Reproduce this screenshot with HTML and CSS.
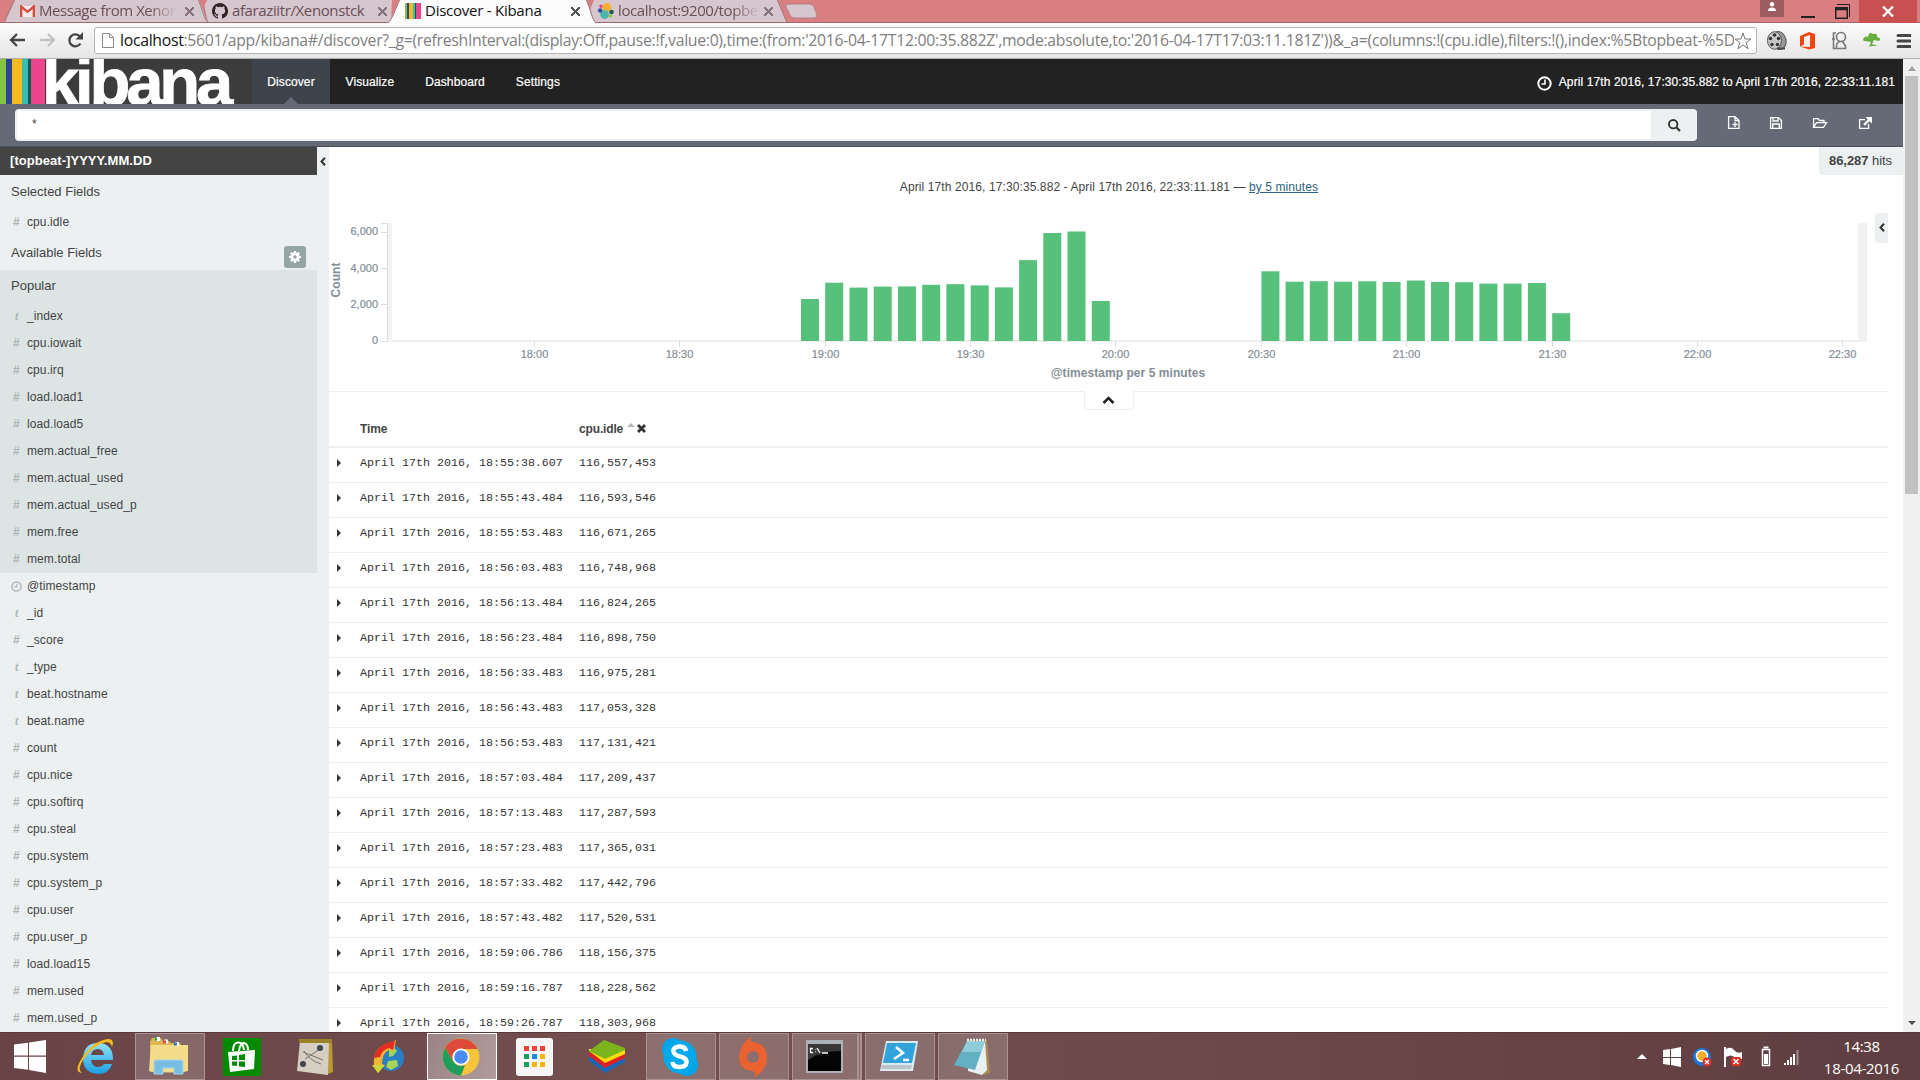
FILE: index.html
```html
<!DOCTYPE html>
<html lang="en">
<head>
<meta charset="utf-8">
<title>Discover - Kibana</title>
<link rel="stylesheet" href="styles.css">
</head>
<body>
<div class="screen">
<header class="tabstrip">
  <svg class="tabshapes" width="1920" height="23" viewBox="0 0 1920 23">
    <path d="M4 23L15 -1H200L208 23Z" fill="#d6c6ce" stroke="#a3787f"/>
    <path d="M208 23L203 -1H392L391 23Z" fill="#d6c6ce"/>
    <path d="M198 -1C203 10 204 20 208 22" fill="none" stroke="#a3787f"/>
    <path d="M199 0H207L203 9Z" fill="#d97f82"/>
    <path d="M393 0H401L397 9Z" fill="#d97f82"/>
    <path d="M594 23L587 -1H777L787 23Z" fill="#d6c6ce" stroke="#a3787f"/>
    <path d="M585 0H594L590 10Z" fill="#d97f82"/>
    <path d="M0 22.5H390M594 22.5H1920" stroke="#a3686d"/>
    <path d="M388 23C392 20 395 10 400 -1H586C591 10 592 20 596 23Z" fill="#fbfbfb"/>
    <path d="M388 23C392 20 395 10 400 -1M586 -1C591 10 592 20 596 23" fill="none" stroke="#a3787f"/>
    <path d="M788 4H810Q813 4 814 7L817 15Q817 18 814 18H794Q791 18 790 15L786 7Q785 4 788 4Z" fill="#d6c6ce" stroke="#b58087"/>
  </svg>
  <div class="tab tab-mail">
    <svg width="15" height="12" viewBox="0 0 15 12"><path d="M1 1H14V12H1Z" fill="#f3e9e9"/><path d="M1.2 12V1.5L7.5 6.8L13.8 1.5V12" fill="none" stroke="#d54b3d" stroke-width="2.3"/></svg>
    <span class="tabtext faded">Message from Xenor</span><i class="x"></i>
  </div>
  <div class="tab tab-git">
    <svg width="16" height="16" viewBox="0 0 16 16"><path fill="#33242a" d="M8 0C3.58 0 0 3.58 0 8c0 3.54 2.29 6.53 5.47 7.59.4.07.55-.17.55-.38v-1.49c-2.01.37-2.53-.49-2.69-.94-.09-.23-.48-.94-.82-1.13-.28-.15-.68-.52-.01-.53.63-.01 1.08.58 1.23.82.72 1.21 1.87.87 2.33.66.07-.52.28-.87.51-1.07-1.78-.2-3.64-.89-3.64-3.95 0-.87.31-1.59.82-2.15-.08-.2-.36-1.02.08-2.12 0 0 .67-.21 2.2.82a7.6 7.6 0 0 1 4 0c1.53-1.04 2.2-.82 2.2-.82.44 1.1.16 1.92.08 2.12.51.56.82 1.27.82 2.15 0 3.07-1.87 3.75-3.65 3.95.29.25.54.73.54 1.48v2.2c0 .21.15.46.55.38A8 8 0 0 0 8 0Z"/></svg>
    <span class="tabtext">afaraziitr/Xenonstck</span><i class="x"></i>
  </div>
  <div class="tab tab-active">
    <i class="kfav"></i>
    <span class="tabtext">Discover - Kibana</span><i class="x"></i>
  </div>
  <div class="tab tab-es">
    <svg width="16" height="16" viewBox="0 0 16 16"><circle cx="9" cy="4.5" r="4.4" fill="#f4b02a"/><circle cx="6.6" cy="11.5" r="4.4" fill="#4ab5a9"/><circle cx="3" cy="3.3" r="1.7" fill="#e8478b"/><circle cx="2.2" cy="7.5" r="2.2" fill="#2f4f9a"/><circle cx="13.5" cy="9" r="2.3" fill="#24584f"/><circle cx="12.3" cy="13" r="1.8" fill="#93c83e"/></svg>
    <span class="tabtext faded">localhost:9200/topbe</span><i class="x"></i>
  </div>
  <div class="wincontrols">
    <span class="profile"><svg width="10" height="9" viewBox="0 0 10 9"><circle cx="5" cy="2.2" r="2.2" fill="#fff"/><path d="M1 9Q1 5.4 5 5.4T9 9Z" fill="#fff"/></svg></span>
    <span class="minimize"></span>
    <svg class="restore" width="15" height="16" viewBox="0 0 15 16"><path d="M2 .5H14.5V13M0 4.5H12" fill="none" stroke="#222"/><path d="M.75 3.75H12.25V14.25H.75Z" fill="none" stroke="#222" stroke-width="1.5"/><path d="M0 5H13" stroke="#222" stroke-width="2.5"/></svg>
    <span class="close"><svg width="12" height="11" viewBox="0 0 12 11"><path d="M1 .5L11 10.5M11 .5L1 10.5" stroke="#fff" stroke-width="2.3"/></svg></span>
  </div>
</header>
<nav class="toolbar">
  <svg class="navicons" width="76" height="16" viewBox="0 0 76 16"><g fill="none" stroke="#464646" stroke-width="2.3"><path d="M16 8H2M8 2L2 8L8 14"/><path d="M31 8H45M39 2L45 8L39 14" stroke="#c2c2c2"/><path d="M71.5 11.5A6 6 0 1 1 71 4.4"/></g><path d="M74 0V7.5H66.5Z" fill="#464646"/></svg>
  <div class="urlbar">
    <svg width="12" height="15" viewBox="0 0 12 15"><path d="M.5.5H7.5L11.5 4.5V14.5H.5ZM7.5.5V4.5H11.5" fill="#fff" stroke="#8c8c8c"/></svg>
    <span class="url"><b>localhost</b>:5601/app/kibana#/discover?_g=(refreshInterval:(display:Off,pause:!f,value:0),time:(from:'2016-04-17T12:00:35.882Z',mode:absolute,to:'2016-04-17T17:03:11.181Z'))&amp;_a=(columns:!(cpu.idle),filters:!(),index:%5Btopbeat-%5DYYYY</span>
    <svg width="18" height="18" viewBox="0 0 18 18"><path d="M9 1L11 7H17L12.2 10.7L14 16.7L9 13L4 16.7L5.8 10.7L1 7H7Z" fill="#fff" stroke="#777"/></svg>
  </div>
  <svg class="ext" width="145" height="20" viewBox="0 0 145 20">
    <ellipse cx="13" cy="9.5" rx="7" ry="9" fill="#999" stroke="#555" transform="rotate(-14 13 9.5)"/><ellipse cx="8.500" cy="9.500" rx="7" ry="8.800" fill="#c5c5c5" stroke="#555"/><g fill="#333"><circle cx="8.500" cy="4" r="1.800"/><circle cx="4.500" cy="7.500" r="1.700"/><circle cx="12.500" cy="7.500" r="1.700"/><circle cx="6" cy="13.500" r="1.700"/><circle cx="11.500" cy="13.500" r="1.700"/></g><path d="M11 17.500H19" stroke="#444" stroke-width="2"/>
    <path d="M34 5L43 1L49 3V17L43 18.500L34 15.500L44 16V4L38 6V13.500L34 15.500Z" fill="#f0450f"/>
    <g fill="none" stroke="#777" stroke-width="1.600"><circle cx="75" cy="6" r="4.500"/><path d="M70 2H67.500V17.500H79.500V15L76.500 10.500M70.500 17Q70 11 74 10.500M66 8H69"/></g>
    <path d="M97 9Q98 4 102 6Q103 0 107 3Q112 2 111 6Q116 7 113 10L108 9L106 13L112 15L106 15L103 16L105 11L98 10Z" fill="#67b040"/>
    <path d="M132 4.500H144M132 10H144M132 15.500H144" stroke="#454545" stroke-width="3" stroke-linecap="round"/>
  </svg>
</nav>
<div class="page">
<div class="app">
  <div class="knav">
    <div class="logo"><i></i><span>kibana</span></div>
    <a class="active">Discover</a><a>Visualize</a><a>Dashboard</a><a>Settings</a>
    <div class="timepicker">
      <svg width="15" height="15" viewBox="0 0 15 15"><circle cx="7.500" cy="7.500" r="6.200" fill="none" stroke="#fff" stroke-width="2"/><path d="M8 3.500V8H4.500" fill="none" stroke="#fff" stroke-width="1.600"/></svg>
      <span>April 17th 2016, 17:30:35.882 to April 17th 2016, 22:33:11.181</span>
    </div>
  </div>
  <div class="searchrow">
    <div class="query"><span>*</span><button><svg width="13" height="13" viewBox="0 0 13 13"><circle cx="5.200" cy="5.200" r="4.200" fill="none" stroke="#333" stroke-width="1.900"/><path d="M8.300 8.300L12 12" stroke="#333" stroke-width="2.200"/></svg></button></div>
    <svg class="tools" width="150" height="16" viewBox="0 0 150 16"><g fill="none" stroke="#fff" stroke-width="1.300"><path d="M2 1.600H8L12 5.500V13.400H1.600V1.600ZM8 1.600V5.500H12M8 7V12M5.500 9.500H10.500"/><path d="M43.600 2.600H51.500L54.400 5.500V13.400H43.600ZM46 3V6H51V3M45.700 13V9H52.300V13"/><path d="M86.600 12V3.600H91L92.500 5.500H97V7.500M86.600 12.400L89.500 7.600H99.500L96.500 12.400Z"/><path d="M138 4.600H132.600V13.400H141.600V9"/></g><path d="M138.500 2H145V8.500L142.600 6.200L138 10.800L136.200 9L140.800 4.400Z" fill="#fff"/></svg>
  </div>
  <div class="main">
    <aside class="sidebar">
      <div class="index">[topbeat-]YYYY.MM.DD</div>
      <div class="head sel">Selected Fields</div>
      <div class="f selected"><i>#</i>cpu.idle</div>
      <div class="head avail">Available Fields
        <span class="gear"><svg width="12" height="12" viewBox="0 0 12 12"><circle cx="6" cy="6" r="3.200" fill="none" stroke="#fff" stroke-width="3"/><path d="M6 0V3M6 9V12M0 6H3M9 6H12M1.800 1.800L3.800 3.800M8.200 8.200L10.200 10.200M10.200 1.800L8.200 3.800M3.800 8.200L1.800 10.200" stroke="#fff" stroke-width="2.200"/></svg></span>
      </div>
      <div class="popular">
        <div class="head pop">Popular</div>
        <div class="f"><i class="t">t</i>_index</div>
        <div class="f"><i>#</i>cpu.iowait</div>
        <div class="f"><i>#</i>cpu.irq</div>
        <div class="f"><i>#</i>load.load1</div>
        <div class="f"><i>#</i>load.load5</div>
        <div class="f"><i>#</i>mem.actual_free</div>
        <div class="f"><i>#</i>mem.actual_used</div>
        <div class="f"><i>#</i>mem.actual_used_p</div>
        <div class="f"><i>#</i>mem.free</div>
        <div class="f"><i>#</i>mem.total</div>
      </div>
      <div class="f"><i><svg width="11" height="11" viewBox="0 0 11 11"><circle cx="5.500" cy="5.500" r="4.600" fill="none" stroke="#b2b8bb" stroke-width="1.500"/><path d="M5.800 2.800V5.900H3.300" fill="none" stroke="#b2b8bb" stroke-width="1.200"/></svg></i>@timestamp</div>
      <div class="f"><i class="t">t</i>_id</div>
      <div class="f"><i>#</i>_score</div>
      <div class="f"><i class="t">t</i>_type</div>
      <div class="f"><i class="t">t</i>beat.hostname</div>
      <div class="f"><i class="t">t</i>beat.name</div>
      <div class="f"><i>#</i>count</div>
      <div class="f"><i>#</i>cpu.nice</div>
      <div class="f"><i>#</i>cpu.softirq</div>
      <div class="f"><i>#</i>cpu.steal</div>
      <div class="f"><i>#</i>cpu.system</div>
      <div class="f"><i>#</i>cpu.system_p</div>
      <div class="f"><i>#</i>cpu.user</div>
      <div class="f"><i>#</i>cpu.user_p</div>
      <div class="f"><i>#</i>load.load15</div>
      <div class="f"><i>#</i>mem.used</div>
      <div class="f"><i>#</i>mem.used_p</div>
    </aside>
    <div class="gutter"><svg width="6" height="9" viewBox="0 0 6 9"><path d="M5 .8L1.500 4.500L5 8.200" fill="none" stroke="#333" stroke-width="2"/></svg></div>
    <section class="content">
      <div class="hits"><b>86,287</b> hits</div>
      <div class="legendtoggle"><svg width="6" height="9" viewBox="0 0 6 9"><path d="M5 .8L1.500 4.500L5 8.200" fill="none" stroke="#333" stroke-width="2"/></svg></div>
      <div class="range">April 17th 2016, 17:30:35.882 - April 17th 2016, 22:33:11.181 — <u>by 5 minutes</u></div>
      <svg class="chart" width="1559" height="186" viewBox="329 205 1559 186">
        <path d="M388 341H1867" stroke="#eee" stroke-width="2"/>
        <rect x="388" y="223" width="4" height="119" fill="#f3f3f3"/>
        <rect x="1858" y="223" width="9" height="119" fill="#f1f1f1"/>
        <path d="M381 223.500H387.500V341.500H381M381 232.500H387M381 268.500H387M381 304.500H387" fill="none" stroke="#ddd"/>
        <path d="M534.500 341V347M679.500 341V347M825.500 341V347M970.500 341V347M1115.500 341V347M1261.500 341V347M1406.500 341V347M1552.500 341V347M1697.500 341V347M1842.500 341V347" stroke="#ddd"/>
        <g fill="#57c17b">
          <rect x="801" y="299" width="18" height="42"/><rect x="825.200" y="282.700" width="18" height="58.300"/><rect x="849.500" y="287.600" width="18" height="53.400"/><rect x="873.700" y="286.600" width="18" height="54.400"/><rect x="898" y="286.400" width="18" height="54.600"/><rect x="922.200" y="284.800" width="18" height="56.200"/><rect x="946.400" y="284.200" width="18" height="56.800"/><rect x="970.700" y="285.400" width="18" height="55.600"/><rect x="994.900" y="287.400" width="18" height="53.600"/><rect x="1019.100" y="260.100" width="18" height="80.900"/><rect x="1043.300" y="233" width="18" height="108"/><rect x="1067.500" y="231.500" width="18" height="109.500"/><rect x="1091.800" y="301" width="18" height="40"/>
          <rect x="1261.400" y="271.300" width="18" height="69.700"/><rect x="1285.600" y="281.700" width="18" height="59.300"/><rect x="1309.800" y="281.200" width="18" height="59.800"/><rect x="1334.100" y="281.700" width="18" height="59.300"/><rect x="1358.300" y="281.300" width="18" height="59.700"/><rect x="1382.600" y="282" width="18" height="59"/><rect x="1406.800" y="280.500" width="18" height="60.500"/><rect x="1431" y="282" width="18" height="59"/><rect x="1455.200" y="282.200" width="18" height="58.800"/><rect x="1479.400" y="283.600" width="18" height="57.400"/><rect x="1503.600" y="283.600" width="18" height="57.400"/><rect x="1527.900" y="283" width="18" height="58"/><rect x="1552.200" y="313.200" width="18" height="27.800"/>
        </g>
        <g class="ticks" text-anchor="end"><text x="378" y="235">6,000</text><text x="378" y="272">4,000</text><text x="378" y="308">2,000</text><text x="378" y="344">0</text></g>
        <g class="ticks" text-anchor="middle"><text x="534.500" y="358">18:00</text><text x="679.500" y="358">18:30</text><text x="825.500" y="358">19:00</text><text x="970.500" y="358">19:30</text><text x="1115.500" y="358">20:00</text><text x="1261.500" y="358">20:30</text><text x="1406.500" y="358">21:00</text><text x="1552.500" y="358">21:30</text><text x="1697.500" y="358">22:00</text><text x="1842.500" y="358">22:30</text></g>
        <text class="axis" x="1128" y="377" text-anchor="middle">@timestamp per 5 minutes</text>
        <text class="axis" transform="translate(340 280) rotate(-90)" text-anchor="middle">Count</text>
      </svg>
      <div class="spy"><span><svg width="13" height="8" viewBox="0 0 13 8"><path d="M1.500 7L6.500 2L11.500 7" fill="none" stroke="#222" stroke-width="2.500"/></svg></span></div>
      <div class="thead"><span class="time">Time</span><span>cpu.idle</span><svg width="19" height="12" viewBox="0 0 19 12"><path d="M0 4L4 0L8 4Z" fill="#b4b9bb"/><path d="M11 2L18 9M18 2L11 9" stroke="#333" stroke-width="2.800"/></svg></div>
      <div class="rows">
        <div class="r"><span>April 17th 2016, 18:55:38.607</span><span>116,557,453</span></div>
        <div class="r"><span>April 17th 2016, 18:55:43.484</span><span>116,593,546</span></div>
        <div class="r"><span>April 17th 2016, 18:55:53.483</span><span>116,671,265</span></div>
        <div class="r"><span>April 17th 2016, 18:56:03.483</span><span>116,748,968</span></div>
        <div class="r"><span>April 17th 2016, 18:56:13.484</span><span>116,824,265</span></div>
        <div class="r"><span>April 17th 2016, 18:56:23.484</span><span>116,898,750</span></div>
        <div class="r"><span>April 17th 2016, 18:56:33.483</span><span>116,975,281</span></div>
        <div class="r"><span>April 17th 2016, 18:56:43.483</span><span>117,053,328</span></div>
        <div class="r"><span>April 17th 2016, 18:56:53.483</span><span>117,131,421</span></div>
        <div class="r"><span>April 17th 2016, 18:57:03.484</span><span>117,209,437</span></div>
        <div class="r"><span>April 17th 2016, 18:57:13.483</span><span>117,287,593</span></div>
        <div class="r"><span>April 17th 2016, 18:57:23.483</span><span>117,365,031</span></div>
        <div class="r"><span>April 17th 2016, 18:57:33.482</span><span>117,442,796</span></div>
        <div class="r"><span>April 17th 2016, 18:57:43.482</span><span>117,520,531</span></div>
        <div class="r"><span>April 17th 2016, 18:59:06.786</span><span>118,156,375</span></div>
        <div class="r"><span>April 17th 2016, 18:59:16.787</span><span>118,228,562</span></div>
        <div class="r"><span>April 17th 2016, 18:59:26.787</span><span>118,303,968</span></div>
      </div>
    </section>
  </div>
</div>
<div class="scrollbar"><i class="up"></i><i class="thumb"></i><i class="down"></i></div>
</div>
<footer class="taskbar">
  <div class="slot start"><svg width="32" height="33" viewBox="0 0 32 33"><path d="M0 4.500L14 2.700V15.600H0ZM15 2.500L32 0V15.600H15ZM0 16.800H14V29.700L0 28ZM15 16.800H32V33L15 30Z" fill="#fff"/></svg></div>
  <div class="slot"><svg width="40" height="38" viewBox="0 0 40 38"><defs><linearGradient id="ie" x2="0" y2="1"><stop offset="0" stop-color="#8fe3fb"/><stop offset="1" stop-color="#1b9fe0"/></linearGradient></defs><path d="M37 22H15Q16 29 22 29Q26 29 28 26H36Q33 36 22 36Q7 35 7 20Q8 5 22 5Q37 5 37 22ZM15 17H28Q27 11 22 11Q16 11 15 17Z" fill="url(#ie)"/><path d="M6 35Q-3 34 6 20Q17 3 32 1Q39 1 36 9Q35 4 30 4Q17 7 7 22Q1 32 6 35Z" fill="#f7bd1c"/></svg></div>
  <div class="slot open"><svg width="40" height="40" viewBox="0 0 40 40"><path d="M1 5L3 1H12L14 4H20L22 6H31L33 10H37V35H1Z" fill="#ddb84f"/><path d="M2 8H39V34Q20 37 0 34Z" fill="#f4dc88"/><path d="M7 2H11M15 4.500H19M26 7H30" stroke="#fff" stroke-width="4"/><path d="M6 2H8" stroke="#2a9b48" stroke-width="3"/><path d="M14 5H17" stroke="#d44" stroke-width="3"/><path d="M25 7H28" stroke="#2970c9" stroke-width="3"/><path d="M5 37V25Q5 23 7 23H32Q34 23 34 25V37H25V31H14V37Z" fill="#79bde2" stroke="#a4d7f0"/></svg></div>
  <div class="slot"><svg width="38" height="38" viewBox="0 0 38 38"><path d="M0 0H38V38H0Z" fill="#008a00"/><path d="M5 14L32 12L31 31L7 34Z" fill="#fff"/><path d="M10 13Q10 5 15 4.500Q20 4 21 12M16 13Q17 5 21 5Q25 6 25 12" fill="none" stroke="#fff" stroke-width="2"/><path d="M9 18L14 17.500V22H9ZM16 17L22 16V22H16ZM9 23.500H14V28L9 27.500ZM16 23.500H22V29L16 28.500Z" fill="#008a00"/></svg></div>
  <div class="slot"><svg width="38" height="38" viewBox="0 0 38 38"><path d="M4 2L36 1L37 34L32 36Z" fill="#b9982f"/><path d="M4 3H33L32 37L1 33Z" fill="#d4cfc2"/><path d="M3 1H36V5H3Z" fill="#9a8226"/><path d="M7 14L27 22M9 21L24 11M8 13Q13 22 25 26" fill="none" stroke="#77736a"/><circle cx="24" cy="10" r="3" fill="#40464d"/><circle cx="7" cy="26" r="3" fill="#40464d"/></svg></div>
  <div class="slot"><svg width="34" height="36" viewBox="0 0 34 36"><circle cx="20" cy="19" r="13" fill="#287fc5"/><path d="M18 11Q24 7 26 12L22 17L18 18ZM17 22L26 21L27 27L20 31L15 28Z" fill="#a5d656"/><path d="M3 26Q1 7 21 3L25 1L23 12L18 11Q11 14 11 25L14 26L7 34L1 26Z" fill="#f5b52b"/><path d="M2 26H13.500L7 34Z" fill="#c8dc3c"/><path d="M3 19Q5 5 24 2L22 11L18 9Q11 11 9 18Z" fill="#e42c23"/></svg></div>
  <div class="slot open current"><svg width="38" height="38" viewBox="0 0 38 38"><circle cx="19" cy="19" r="18.500" fill="#f6c33b"/><path d="M3 10A18.500 18.500 0 0 1 35.500 11H19A9 9 0 0 0 11 23Z" fill="#df4937"/><path d="M3 10L11 23A9 9 0 0 0 23 27L19 37.500A18.500 18.500 0 0 1 3 10Z" fill="#1f9d5a"/><circle cx="19" cy="19" r="8.500" fill="#fff"/><circle cx="19" cy="19" r="6.800" fill="#4b8bf5"/></svg></div>
  <div class="slot"><svg width="37" height="38" viewBox="0 0 37 38"><rect width="37" height="38" rx="3" fill="#f6f6f6"/><path d="M8 8H13V13H8ZM16 8H21V13H16ZM24 8H29V13H24Z" fill="#ee4035"/><path d="M8 16H13V21H8ZM8 24H13V29H8Z" fill="#17a05d"/><path d="M16 16H21V21H16Z" fill="#198ae2"/><path d="M24 16H29V21H24ZM16 24H21V29H16ZM24 24H29V29H24Z" fill="#fbb40d"/></svg></div>
  <div class="slot"><svg width="38" height="36" viewBox="0 0 38 36"><path d="M1 22L17 34L37 23V18L1 18Z" fill="#1667b5"/><path d="M1 17L17 29L37 19V14H1Z" fill="#dd1f27"/><path d="M1 12L17 24L37 15V10H1Z" fill="#ffdd0c"/><path d="M1 12L16 1L37 9V11L17 20Z" fill="#7bb51c"/></svg></div>
  <div class="slot open"><svg width="38" height="40" viewBox="0 0 38 40"><circle cx="12" cy="12" r="11" fill="#00a4e8"/><circle cx="26" cy="28" r="11" fill="#00a4e8"/><circle cx="19" cy="20" r="16.500" fill="#00a8ec"/><path d="M25 14Q24 9 18 9.500Q12 10 12.500 14.500Q13 18 19 19.500Q26 21 25.500 25.500Q25 30 18 30Q12 30 11.500 25" fill="none" stroke="#fff" stroke-width="4.500"/></svg></div>
  <div class="slot open"><svg width="32" height="42" viewBox="0 0 32 42"><path d="M15 0Q12 4 15 6Q29 7 30 21Q30 34 17 42Q20 37 16 35Q2 34 2 21Q3 7 15 0ZM16 15A6 6 0 1 0 16 27A6 6 0 1 0 16 15Z" fill="#e9622f" fill-rule="evenodd"/></svg></div>
  <div class="slot open stacked"><svg width="37" height="33" viewBox="0 0 37 33"><path d="M0 0H37V33H0Z" fill="#aab2b8"/><path d="M2 4H35V31H2Z" fill="#050505"/><path d="M2 4H35V11Q14 11 2 20Z" fill="#383838"/><path d="M7 8.500H4.500V12.500H7M9.500 9V9.600M9.500 11.500V12.200M11 8L14 13M16 13H22" stroke="#fff" stroke-width="1.300" fill="none"/></svg></div>
  <div class="slot open"><svg width="40" height="32" viewBox="0 0 40 32"><path d="M7 0H39L34 30H1Z" fill="#dcebf2"/><path d="M8 2H37L33 22H4Z" fill="#31a3da"/><path d="M17 6L24 12L15 18M24 19H30" fill="none" stroke="#fff" stroke-width="2.500"/><path d="M3 24H33L32 28H2Z" fill="#bbc4c8"/></svg></div>
  <div class="slot open"><svg width="38" height="38" viewBox="0 0 38 38"><path d="M15 2H34L37 35L31 37Z" fill="#a68c50"/><path d="M14 3H32L34 32L29 37L15 33Z" fill="#e9f0f2"/><path d="M14 3H32L22 32L1 27Z" fill="#62b0c3"/><path d="M14 3H32L28 14H9Z" fill="#8eccda"/><path d="M14 2H33" stroke="#eee" stroke-width="2.500" stroke-dasharray="2 1"/></svg></div>
  <div class="tray">
    <svg width="166" height="24" viewBox="0 0 166 24"><path d="M0 14L5 9L10 14Z" fill="#fff"/><path d="M26 5L33 4V12H26ZM34 4L44 2V12H34ZM26 13H33V20L26 19ZM34 13H44V22L34 20Z" fill="#fff"/><circle cx="65" cy="12" r="9" fill="#1678dc"/><circle cx="65" cy="11" r="5.500" fill="#ffae2b" stroke="#fff" stroke-width="1.500"/><circle cx="70" cy="17" r="4.500" fill="#d92e2e"/><path d="M68 15L72 19M72 15L68 19" stroke="#fff" stroke-width="1.300"/><path d="M88 2V22" stroke="#fff" stroke-width="2"/><path d="M89 4Q94 1 97 5T105 7V14Q100 15 97 12T89 12Z" fill="#fff"/><rect x="94" y="12" width="10" height="9" rx="2" fill="#d92e20"/><path d="M96.500 14L101.500 19M101.500 14L96.500 19" stroke="#fff" stroke-width="1.500"/><path d="M125.500 4.500H132.500V20.500H125.500Z" fill="none" stroke="#fff" stroke-width="1.500"/><path d="M126.500 2.500H131.500" stroke="#fff" stroke-width="2"/><path d="M127 9H131V19H127Z" fill="#fff"/><path d="M147 18H149V20H147ZM150 15H152V20H150ZM153 12H155V20H153ZM156 9H158V20H156Z" fill="#fff"/><path d="M159.500 5H161.500V20H159.500Z" fill="#a08c8e"/></svg>
    <div class="clock"><div>14:38</div><div>18-04-2016</div></div>
  </div>
</footer>
</div>
</body>
</html>
```
FILE: styles.css
```css
* { box-sizing: border-box; }
body { margin: 0; font: 12px/17px "Liberation Sans", Arial, sans-serif; color: #444; letter-spacing: .1px; }
svg { display: block; flex: none; }
i { font-style: normal; }
.screen { width: 1920px; height: 1080px; display: flex; flex-direction: column; overflow: hidden; }

/* browser chrome */
.tabstrip { position: relative; height: 23px; background: #d97f82; display: flex; flex: none; font: 15px/22px "Open Sans", sans-serif; color: #6a4f57; }
.tabshapes { position: absolute; left: 0; top: 0; }
.tab { position: relative; display: flex; align-items: center; height: 22px; }
.tabtext { flex: 1; line-height: 22px; margin-top: -2px; white-space: nowrap; overflow: hidden; letter-spacing: -0.38px; }
.faded { -webkit-mask-image: linear-gradient(90deg, #000 80%, transparent); mask-image: linear-gradient(90deg, #000 80%, transparent); }
.tab-mail { width: 212px; padding: 0 18px 0 20px; gap: 4px; }
.tab-mail .tabtext { letter-spacing: -.45px; margin-right: 4px; }
.tab-es .tabtext { letter-spacing: -.4px; }
.tab-git { width: 193px; padding: 0 18px 0 0; gap: 4px; }
.tab-active { width: 193px; padding: 0 18px 0 0; gap: 4px; color: #111; }
.tab-active .tabtext { letter-spacing: -.25px; }
.tab-es { width: 190px; padding: 0 15px 0 0; gap: 4px; }
.x { width: 9px; height: 9px; background: linear-gradient(45deg, transparent 44%, #86727a 44%, #86727a 56%, transparent 56%), linear-gradient(-45deg, transparent 44%, #86727a 44%, #86727a 56%, transparent 56%); }
.tab-active .x { background: linear-gradient(45deg, transparent 43%, #555 43%, #555 57%, transparent 57%), linear-gradient(-45deg, transparent 43%, #555 43%, #555 57%, transparent 57%); }
.kfav { width: 16px; height: 16px; background: linear-gradient(90deg, #85c441 2px, #2d4494 2px 4px, #f4bb1b 4px 8px, #3bbeb0 8px 10px, #0c5c54 10px 11px, #ec458c 11px); }
.wincontrols { margin-left: auto; position: relative; display: flex; padding-right: 3px; }
.profile { width: 24px; height: 17px; background: #9c5b5f; padding: 2px 7px; margin-right: 17px; }
.minimize { width: 14px; height: 2px; background: #222; margin: 16px 20px 0 0; }
.restore { margin: 4px 9px 0 0; }
.close { width: 58px; height: 23px; background: #c75050; padding: 6px 23px; }
.toolbar { height: 36px; flex: none; background: linear-gradient(#fbfbfb, #e6e6e6); border-bottom: 1px solid #b0b0b0; display: flex; align-items: flex-start; }
.navicons { margin: 9px 9px 0 9px; }
.urlbar { width: 1663px; height: 27px; margin-top: 4px; border: 1px solid #b5b5b5; border-radius: 3px; background: #fff; display: flex; align-items: center; padding: 0 3px 0 7px; }
.url { width: 1614px; margin: -2px 0 0 6px; overflow: hidden; white-space: nowrap; font: 15.8px/24px "Open Sans", sans-serif; color: #808080; letter-spacing: -0.3px; }
.url b { font-weight: 400; color: #111; }
.ext { margin: 8px 0 0 9px; }

.page { flex: 1; min-height: 0; display: flex; overflow: hidden; }
.app { width: 1903px; background: #fff; display: flex; flex-direction: column; }
.scrollbar { width: 17px; background: #f0f0f0; position: relative; display: flex; flex-direction: column; align-items: center; }
.up { border: 4px solid transparent; border-top: 0; border-bottom: 5px solid #a3a3a3; margin: 7px 0 5px; }
.thumb { width: 13px; height: 418px; background: #c1c1c1; }
.down { border: 4px solid transparent; border-bottom: 0; border-top: 4px solid #505050; margin: auto 0 7px; }

/* kibana header */
.knav { height: 45px; flex: none; background: #222; display: flex; font-size: 12px; line-height: 47px; color: #fff; -webkit-text-stroke: .2px #fff; }
.logo { width: 252px; height: 45px; background: #3c3c3c; display: flex; overflow: hidden; }
.logo i { width: 45px; flex: none; background: linear-gradient(90deg, #85c441 6px, #2d4494 6px 12px, #f4bb1b 12px 22px, #3bbeb0 22px 28px, #0c5c54 28px 31px, #ec458c 31px); }
.logo span { font: bold 67px/67px "Liberation Sans", sans-serif; letter-spacing: -4.2px; margin: -11px 0 0 -3px; -webkit-text-stroke: .8px #fff; }
.knav a { padding: 0 15.500px; }
.knav a.active { width: 78px; padding: 0; text-align: center; position: relative; background: #3f444c; }
.active::after { content: ""; position: absolute; left: 32px; bottom: 0; border: 7px solid transparent; border-top: 0; border-bottom-color: #656a76; }
.timepicker { margin-left: auto; padding-right: 8px; display: flex; align-items: center; gap: 7px; font-size: 12px; height: 45px; }
.timepicker span { margin-top: 1px; }
.timepicker svg { margin-top: 3px; }
.searchrow { height: 43px; flex: none; background: #656a76; border-bottom: 1px solid #4c4f59; display: flex; padding: 5px 0 0 15px; }
.query { width: 1682px; height: 32px; border-radius: 4px; background: #fff; border: 2px solid #ecf0f1; border-right: 0; overflow: hidden; display: flex; justify-content: space-between; padding-left: 15px; line-height: 27px; }
.query button { width: 46px; border: 0; background: #ecf0f1; padding: 0 0 0 17px; }
.tools { margin: 6px 0 0 30px; }

.main { flex: 1; min-height: 0; display: flex; }
.sidebar { width: 317px; background: #ecf0f1; }
.index { height: 28px; background: #444; color: #fff; font-weight: 700; font-size: 13px; line-height: 27px; padding-left: 10px; letter-spacing: .05px; }
.head { font-size: 13px; padding-left: 11px; letter-spacing: 0; }
.sel { height: 33px; line-height: 33px; }
.avail { height: 34px; line-height: 33px; display: flex; justify-content: space-between; padding-right: 11px; }
.gear { width: 22px; height: 22px; margin-top: 10px; border-radius: 3px; background: #95a5a6; padding: 5px; }
.popular { background: #dce4e4; }
.pop { height: 33px; line-height: 32px; }
.f { height: 27px; line-height: 27px; display: flex; align-items: center; padding: 0 0 0 11px; }
.f.selected { height: 28px; }
.f i { width: 16px; padding-left: 2px; color: #aeb5b8; font-weight: 700; }
.f i svg { margin-left: -2px; }
.f .t { font: italic bold 12px/27px "Liberation Serif", serif; padding-left: 4px; }
.gutter { width: 12px; background: #ecf0f1; padding: 10px 0 0 3px; }

.content { width: 1559px; position: relative; display: flex; flex-direction: column; }
.hits { position: absolute; right: -15px; top: 0; width: 84px; height: 28px; background: #ecf0f1; border-radius: 0 0 0 4px; line-height: 27px; padding-left: 10px; font-size: 13px; letter-spacing: -.05px; white-space: nowrap; }
.legendtoggle { position: absolute; right: 0; top: 66px; width: 13px; height: 30px; background: #ecf0f1; border-radius: 4px 0 0 4px; padding: 10px 4px; }
.range { height: 58px; flex: none; padding: 32px 0 0 1px; text-align: center; }
.range u { color: #2f6480; }
.chart { height: 186px; }
.ticks { font-size: 11px; fill: #848e96; stroke: #848e96; stroke-width: .2px; letter-spacing: 0; }
.axis { font-size: 12px; font-weight: 700; fill: #848e96; letter-spacing: .05px; }
.spy { height: 19px; flex: none; border-top: 1px solid #ecf0f1; display: flex; justify-content: center; }
.spy span { width: 50px; height: 19px; margin-top: -1px; background: #fff; border: 1px solid #ecf0f1; border-top: 0; border-radius: 0 0 4px 4px; padding: 5px 17px; }
.thead { height: 38px; flex: none; border-bottom: 2px solid #ecf0f1; display: flex; padding: 11px 0 0 31px; font-weight: 700; letter-spacing: -.15px; }
.thead .time { width: 219px; }
.thead svg { margin: 2px 0 0 4px; }
.rows { flex: none; }
.r { height: 35px; border-bottom: 1px solid #ecf0f1; display: flex; padding-left: 31px; font: 11.670px/31px "Liberation Mono", monospace; letter-spacing: 0; color: #333; position: relative; }
.r span:first-of-type { width: 219px; }
.r::before { content: ""; position: absolute; left: 8px; top: 11px; border: 4px solid transparent; border-right: 0; border-left-color: #333; }

/* desktop taskbar */
.taskbar { height: 48px; flex: none; position: relative; background: linear-gradient(90deg, #694346, #74504f 35%, #6b4849 65%, #5f3e41); border-top: 1px solid #59383b; display: flex; gap: 3px; }
.slot { width: 70px; height: 47px; display: flex; align-items: center; justify-content: center; border: 1px solid transparent; padding-right: 2px; }
.start { width: 62px; margin-right: -3px; }
.open { background: rgba(255,255,255,.18); border-color: #aa9293; }
.current { background: linear-gradient(110deg, #9b8383, #b09c9c); border-color: #fff; }
.stacked { border-right: 5px double #aa9293; }
.tray { margin-left: auto; display: flex; align-items: center; }
.clock { width: 117px; text-align: center; font: 15px/22px "Open Sans", sans-serif; color: #fff; letter-spacing: -.3px; }
```
